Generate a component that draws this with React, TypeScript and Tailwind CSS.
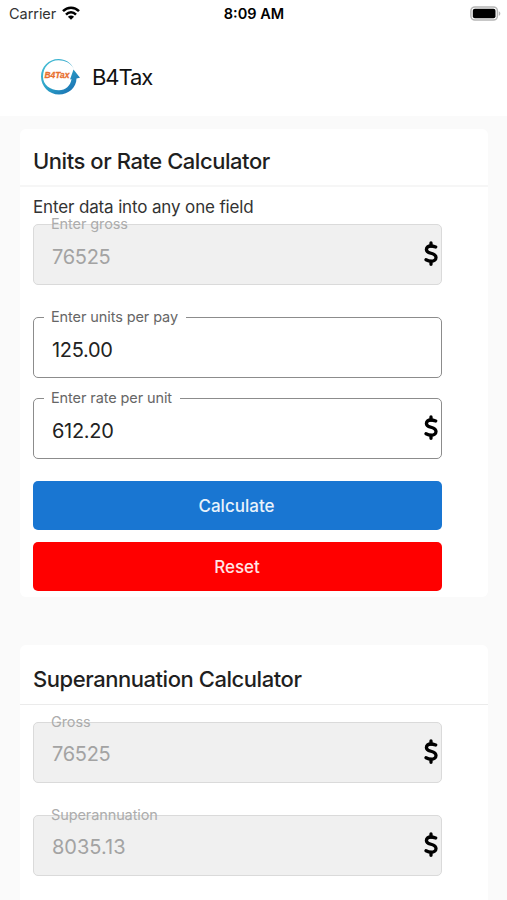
import React from "react";
import clsx from "clsx";

interface FieldProps {
  label: string;
  value: string;
  disabled?: boolean;
  money?: boolean;
  className?: string;
  valueClassName?: string;
}

interface CardProps {
  title: string;
  className?: string;
  headingClassName: string;
  children: React.ReactNode;
}

const Logo = () => (
  <svg viewBox="0 0 40 38" className="h-[38px] w-10">
    <defs>
      <linearGradient id="ring" x1="0" y1="0" x2="1" y2="1">
        <stop offset="0" stopColor="#4cc4d8" />
        <stop offset="0.5" stopColor="#2a9fc6" />
        <stop offset="1" stopColor="#1763ad" />
      </linearGradient>
    </defs>
    <path
      d="M34 11C31 4.500 25 1 18.500 1C8.500 1 1 9 1 18.500C1 28.500 9 36.500 19 36.500C28.500 36.500 36.500 29.500 36.500 20.500L40 19.800L33.500 11.500L30 21.500L31.500 21C30.500 28 25.500 32.200 19 32.200C10 32.200 3 27 3 18.500C3 9.500 9.500 2.300 18.500 2.300C25 2.300 30.500 5 34 11Z"
      fill="url(#ring)"
    />
    <text
      x="4.500"
      y="20"
      textLength="25"
      lengthAdjust="spacingAndGlyphs"
      className="fill-[#e8702f] stroke-[#e8702f] stroke-[0.3px] font-['Liberation_Sans'] text-[8.5px] font-bold italic"
    >
      B4Tax
    </text>
  </svg>
);

const DollarIcon = () => (
  <svg
    viewBox="0 0 14 25"
    className="mb-[2px] h-[25px] w-[14px]"
    fill="none"
    stroke="#000"
    strokeWidth="3.300"
    strokeLinecap="round"
    strokeLinejoin="round"
  >
    <path d="M7 2V5M7 20.500V23.300" />
    <path d="M11.700 6C9.500 5.200 8.200 5 6.800 5C4.200 5 2.400 6.300 2.400 8.400C2.400 10.900 4.500 11.500 7 12.300C9.700 13.100 12 13.900 12 16.500C12 18.800 9.900 20.200 7.200 20.200C5.300 20.200 3.700 19.600 2 18.700" />
  </svg>
);

const StatusBar = () => (
  <div className="grid h-7 grid-cols-3 items-center pr-[6px] pl-[9px]">
    <div className="flex items-center gap-[6px]">
      <span className="text-[14.5px] tracking-[-0.05px] text-[#333]">Carrier</span>
      <svg viewBox="0 0 18 14" className="mb-[3px] h-[14px] w-[18px]" fill="none" stroke="#000" strokeWidth="2.500">
        <path d="M1 5.200C5.500 0.600 12.500 0.600 17 5.200" />
        <path d="M4 8.600C6.900 5.600 11.100 5.600 14 8.600" />
        <path d="M9 13.800L5.900 10.800C7.600 9.200 10.400 9.200 12.100 10.800Z" fill="#000" stroke="none" />
      </svg>
    </div>
    <span className="pr-[2px] text-center text-[14.5px] font-semibold text-black">8:09 AM</span>
    <svg viewBox="0 0 31 15" className="mb-[2px] h-[15px] w-[31px] justify-self-end">
      <rect x="0.900" y="0.900" width="26.500" height="13.200" rx="4" fill="#fff" stroke="#b5b5b5" strokeWidth="1.500" />
      <rect x="2.800" y="2.800" width="22.700" height="9.400" rx="2" fill="#000" />
      <path d="M28.800 5.200C30.800 6 30.800 9 28.800 9.800Z" fill="#b5b5b5" />
    </svg>
  </div>
);

const Field = ({
  label,
  value,
  disabled = false,
  money = false,
  className,
  valueClassName = "pt-1 tracking-[-0.3px]",
}: FieldProps) => (
  <div
    className={clsx(
      "relative flex h-[61px] w-[409px] items-center justify-between rounded-[5px] border pr-[3px] pl-[18px]",
      disabled ? "border-[#dadada] bg-[#f0f0f0]" : "border-[#8c8c8c] bg-white",
      className
    )}
  >
    <span
      className={clsx(
        "absolute -top-[10px] left-[10px] pr-2 pl-[7px] text-[14.5px] leading-[18px] tracking-[-0.1px]",
        disabled ? "text-[#acacac]" : "bg-white text-[#666]"
      )}
    >
      {label}
    </span>
    <span className={clsx("text-[20px]", disabled ? "text-[#a3a3a3]" : "text-[#222]", valueClassName)}>{value}</span>
    {money && <DollarIcon />}
  </div>
);

const Card = ({ title, className, headingClassName, children }: CardProps) => (
  <section className={clsx("mx-5 w-[468px] rounded-md bg-white", className)}>
    <h2
      className={clsx(
        "flex items-center px-[13px] text-[22px] font-medium tracking-[-0.45px] text-[#1f1f1f]",
        headingClassName
      )}
    >
      {title}
    </h2>
    <div className="px-[13px]">{children}</div>
  </section>
);

export default function App() {
  return (
    <div className="h-[900px] w-[507px] overflow-hidden bg-[#fafafa] font-[Inter,sans-serif]">
      <header className="h-[116px] bg-white">
        <StatusBar />
        <div className="flex items-center gap-3 pt-[30px] pl-10">
          <Logo />
          <h1 className="text-[22px] tracking-[-1.1px] text-[#111]">B4Tax</h1>
        </div>
      </header>

      <Card
        title="Units or Rate Calculator"
        className="mt-[13px] h-[468px]"
        headingClassName="h-[58px] border-b-2 border-[#f6f6f6] pt-2"
      >
        <p className="pt-2 text-[17px] leading-6 tracking-[-0.14px] text-[#333]">Enter data into any one field</p>
        <Field label="Enter gross" value="76525" disabled money className="mt-[5px]" />
        <Field label="Enter units per pay" value="125.00" className="mt-8" />
        <Field label="Enter rate per unit" value="612.20" money className="mt-[20px]" />
        <button className="mt-[22px] block h-[49px] w-[409px] rounded-[5px] bg-[#1976d2] pt-[2px] pr-[2px] text-[17px] font-medium text-[#e8f2fb]">
          Calculate
        </button>
        <button className="mt-3 block h-[49px] w-[409px] rounded-[5px] bg-[#ff0000] pt-[2px] pr-px text-[17px] font-medium text-[#ffe5e5]">
          Reset
        </button>
      </Card>

      <Card
        title="Superannuation Calculator"
        className="mt-12 h-[300px]"
        headingClassName="h-[60px] border-b border-[#ebebeb] pt-[10px]"
      >
        <Field label="Gross" value="76525" disabled money className="mt-[17px]" valueClassName="pt-[3px] tracking-[-0.3px]" />
        <Field label="Superannuation" value="8035.13" disabled money className="mt-8" valueClassName="pt-[3px]" />
      </Card>
    </div>
  );
}
